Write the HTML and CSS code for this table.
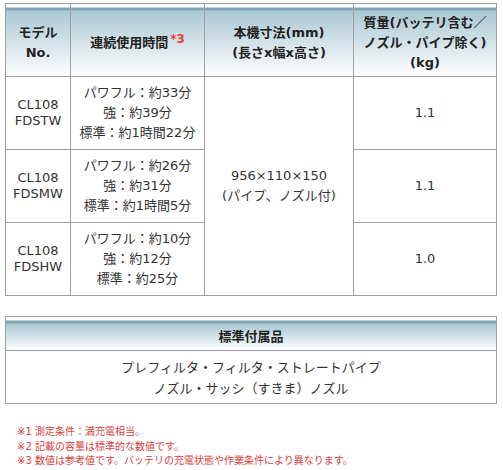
FILE: index.html
```html
<!DOCTYPE html>
<html lang="ja">
<head>
<meta charset="utf-8">
<link rel="stylesheet" href="styles.css">
</head>
<body>
<div class="page">
  <table class="spec">
    <colgroup>
      <col class="c1"><col class="c2"><col class="c3"><col class="c4">
    </colgroup>
    <thead>
      <tr>
        <th>モデル<br>No.</th>
        <th>連続使用時間<span class="ref">*3</span></th>
        <th>本機寸法(mm)<br>(長さx幅x高さ)</th>
        <th>質量(バッテリ含む／<br>ノズル・パイプ除く)<br>(kg)</th>
      </tr>
    </thead>
    <tbody>
      <tr>
        <td class="model">CL108<br>FDSTW</td>
        <td class="jp">パワフル：約33分<br>強：約39分<br>標準：約1時間22分</td>
        <td class="jp" rowspan="3">956×110×150<br>(パイプ、ノズル付)</td>
        <td>1.1</td>
      </tr>
      <tr>
        <td class="model">CL108<br>FDSMW</td>
        <td class="jp">パワフル：約26分<br>強：約31分<br>標準：約1時間5分</td>
        <td>1.1</td>
      </tr>
      <tr>
        <td class="model">CL108<br>FDSHW</td>
        <td class="jp">パワフル：約10分<br>強：約12分<br>標準：約25分</td>
        <td>1.0</td>
      </tr>
    </tbody>
  </table>

  <table class="acc">
    <thead>
      <tr><th>標準付属品</th></tr>
    </thead>
    <tbody>
      <tr><td>プレフィルタ・フィルタ・ストレートパイプ<br>ノズル・サッシ（すきま）ノズル</td></tr>
    </tbody>
  </table>

  <ul class="notes">
    <li>※1 測定条件：満充電相当。</li>
    <li>※2 記載の容量は標準的な数値です。</li>
    <li>※3 数値は参考値です。バッテリの充電状態や作業条件により異なります。</li>
  </ul>
</div>
</body>
</html>
```

FILE: styles.css
```css
html, body {
  margin: 0;
  padding: 0;
  background: #fff;
}

.page {
  padding: 3px 6px 0 5px;
  font-family: "DejaVu Sans", "Noto Sans CJK JP", sans-serif;
  font-size: 13px;
  color: #333;
}

table {
  border-collapse: collapse;
  width: 492px;
  table-layout: fixed;
}

.c1 { width: 65px; }
.c2 { width: 134px; }
.c3 { width: 149px; }
.c4 { width: 143px; }

th, td {
  border: 1px solid #a0a0a0;
  text-align: center;
  padding: 0;
}

th {
  font-weight: bold;
  color: #222;
  line-height: 20px;
  padding-top: 6px;
  background: linear-gradient(to bottom,
    #ffffff 0px, #ffffff 3px,
    #7ea6b3 3px, #7ea6b3 6px,
    #a9c7d2 6px, #ffffff 100%);
}

.spec thead tr { height: 73px; }
.spec tbody tr { height: 73px; }

td { line-height: 20px; }
td.model { line-height: 16px; }

.ref {
  color: #e8403c;
  font-size: 12px;
  position: relative;
  top: -4px;
  margin-left: 2px;
}

.acc {
  margin-top: 20px;
  width: 492px;
}

.acc thead tr { height: 34px; }
.acc tbody tr { height: 53px; }
.acc td { line-height: 21px; padding-top: 1px; }

.notes {
  list-style: none;
  margin: 21px 0 0 0;
  padding: 0 0 0 12px;
  color: #d94040;
  font-size: 10px;
  line-height: 14.5px;
}
```
